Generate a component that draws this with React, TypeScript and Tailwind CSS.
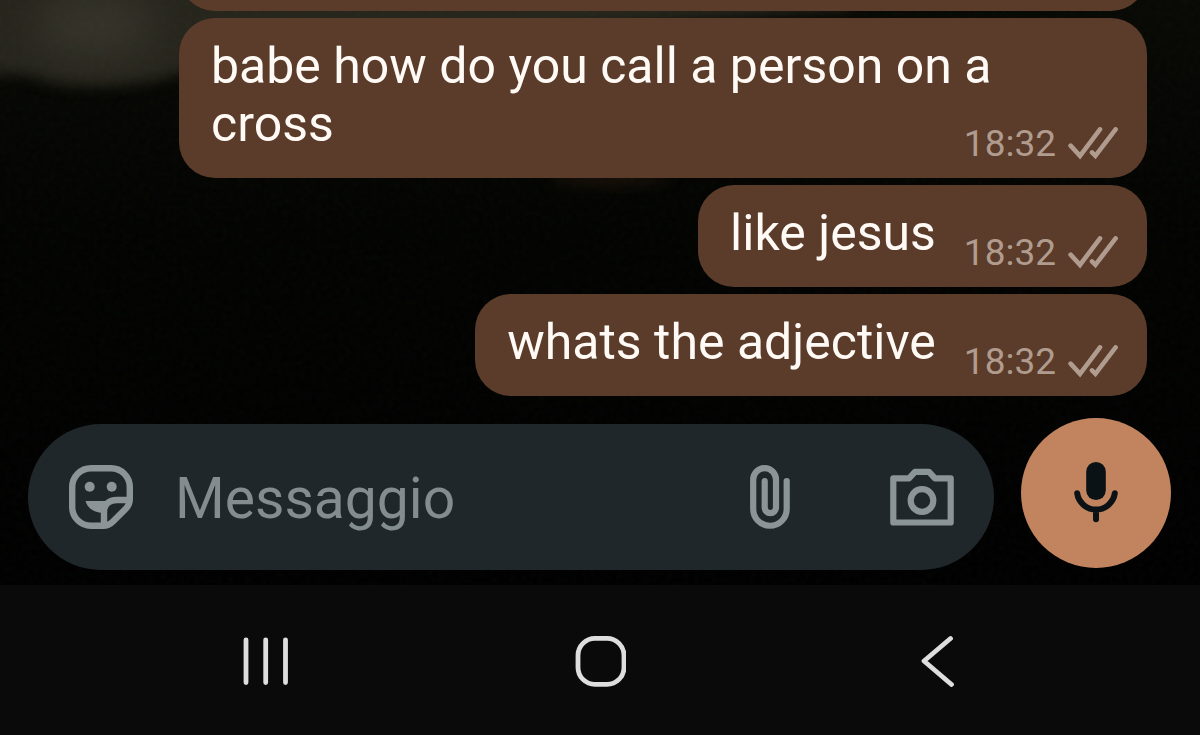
type Message = {
  id: number;
  text: string;
  time: string;
};

const messages: Message[] = [
  { id: 1, text: "babe how do you call a person on a cross", time: "18:32" },
  { id: 2, text: "like jesus", time: "18:32" },
  { id: 3, text: "whats the adjective", time: "18:32" },
];

function DoubleCheck() {
  return (
    <svg
      width="50"
      height="34"
      viewBox="0 0 50 34"
      fill="none"
      stroke="currentColor"
      strokeWidth="4.6"
      strokeLinecap="round"
      aria-hidden="true"
    >
      <path d="M2.6 18.6 12 28.8 32 2.4" />
      <path d="M24 25.4 27.4 28.8 47.6 2.4" />
    </svg>
  );
}

function StickerIcon() {
  return (
    <svg width="64" height="64" viewBox="0 0 64 64" fill="none" aria-hidden="true">
      <g stroke="currentColor" strokeWidth="6.4" strokeLinejoin="round">
        <path d="M22 3.2H42A18.8 18.8 0 0 1 60.8 22V34C60.8 38.5 59.5 41 56.5 44L44 56.5C41 59.5 38.5 60.8 34 60.8H22A18.8 18.8 0 0 1 3.2 42V22A18.8 18.8 0 0 1 22 3.2Z" />
        <path d="M60 35H48C40 35 35 39.5 35 47V60" />
      </g>
      <path d="M16.5 36H41L34 48C25 47.5 18.5 43.5 16.5 36Z" fill="currentColor" />
      <circle cx="20.7" cy="21.7" r="5" fill="currentColor" />
      <circle cx="42.7" cy="21.7" r="5" fill="currentColor" />
    </svg>
  );
}

function PaperclipIcon() {
  return (
    <svg width="40" height="64" viewBox="0 0 40 64" fill="none" aria-hidden="true">
      <path
        d="M36.7 16V44A16.75 16.75 0 0 1 3.2 44V14.6A11.4 11.4 0 0 1 26 14.6V42.5A5.65 5.65 0 0 1 14.7 42.5V16"
        stroke="currentColor"
        strokeWidth="6.2"
        strokeLinecap="round"
      />
    </svg>
  );
}

function CameraIcon() {
  return (
    <svg width="64" height="64" viewBox="0 0 64 64" fill="none" aria-hidden="true">
      <g stroke="currentColor" strokeWidth="6.2" strokeLinejoin="round">
        <path d="M3.3 13.3H19L25 6.8H39L45 13.3H60.7V57.5H3.3Z" />
        <circle cx="32" cy="35.5" r="11.3" />
      </g>
    </svg>
  );
}

function MicIcon() {
  return (
    <svg width="44" height="62" viewBox="0 0 44 62" fill="none" aria-hidden="true">
      <rect x="12.2" y="0" width="19.6" height="38" rx="9.8" fill="currentColor" />
      <path
        d="M3.2 31.3A19 19 0 0 0 40.8 31.3M22 47.5V57.3"
        stroke="currentColor"
        strokeWidth="6"
        strokeLinecap="round"
      />
    </svg>
  );
}

// Dim, grainy photo behind the chat
function Wallpaper() {
  return (
    <svg className="absolute inset-0 w-full h-full" aria-hidden="true">
      <defs>
        <filter id="soft" x="-20%" y="-50%" width="140%" height="200%" colorInterpolationFilters="sRGB">
          <feGaussianBlur stdDeviation="7" />
        </filter>
        <filter id="wide" x="-50%" y="-50%" width="200%" height="200%" colorInterpolationFilters="sRGB">
          <feGaussianBlur stdDeviation="20" />
        </filter>
        <filter id="grain" colorInterpolationFilters="sRGB">
          <feTurbulence type="fractalNoise" baseFrequency="0.18" numOctaves="2" />
        </filter>
        <linearGradient id="shade" x1="0" y1="0" x2="0" y2="1">
          <stop offset="0" stopColor="#080904" />
          <stop offset="0.4" stopColor="#020301" />
          <stop offset="1" stopColor="#000000" />
        </linearGradient>
      </defs>
      <rect width="100%" height="100%" fill="url(#shade)" />
      <path
        d="M-40 -40H850V8L560 30L190 68C165 88 60 92 32 76L-40 72Z"
        fill="#26251c"
        filter="url(#soft)"
      />
      <ellipse cx="95" cy="25" rx="60" ry="32" fill="#35342a" filter="url(#wide)" />
      <ellipse cx="610" cy="178" rx="60" ry="8" fill="#171008" filter="url(#soft)" />
      <rect width="100%" height="100%" filter="url(#grain)" opacity="0.03" />
    </svg>
  );
}

function Bubble({ message }: { message: Message }) {
  return (
    <li className="flow-root shrink-0 max-w-full rounded-[36px] bg-[#5b3b29] pt-[19px] pb-3 pl-8 pr-[29px] text-[50px] leading-[58px] text-[#fffaf5]">
      {message.text}
      <span className="float-right mt-[27px] ml-7 flex items-center gap-3 text-[37px] leading-[44px] text-[#b09c8f]">
        <time>{message.time}</time>
        <DoubleCheck />
      </span>
    </li>
  );
}

function Composer() {
  return (
    <form
      className="flex items-start gap-[27px] pt-[22px] pb-[15px] pl-7 pr-[29px]"
      onSubmit={(e) => e.preventDefault()}
    >
      <div className="mt-1.5 flex h-[146px] min-w-0 flex-1 items-center rounded-full bg-[#20272a] pl-[41px] pr-10 text-[#8b9497]">
        <button type="button" aria-label="Sticker">
          <StickerIcon />
        </button>
        <input
          type="text"
          aria-label="Messaggio"
          placeholder="Messaggio"
          className="ml-[42px] min-w-0 flex-1 bg-transparent pt-1 text-[57px] leading-[68px] text-white outline-none placeholder:text-[#838c8f]"
        />
        <button type="button" aria-label="Allega">
          <PaperclipIcon />
        </button>
        <button type="button" aria-label="Fotocamera" className="ml-[100px]">
          <CameraIcon />
        </button>
      </div>
      <button
        type="button"
        aria-label="Messaggio vocale"
        className="flex size-[150px] shrink-0 items-center justify-center rounded-full bg-[#c1845f] text-[#0b1216]"
      >
        <MicIcon />
      </button>
    </form>
  );
}

function NavBar() {
  return (
    <nav className="grid h-[150px] shrink-0 grid-cols-3 place-items-center bg-[#0a0a0a] px-24 pt-0.5 text-[#dedede]">
      <button type="button" aria-label="Recenti">
        <svg width="52" height="52" viewBox="0 0 52 52" fill="none" stroke="currentColor" strokeWidth="4.8" strokeLinecap="round">
          <path d="M8 4.8V47.6M27.700 4.8V47.6M47.500 4.8V47.6" />
        </svg>
      </button>
      <button type="button" aria-label="Home">
        <svg width="52" height="52" viewBox="0 0 52 52" fill="none" stroke="currentColor" strokeWidth="4.8">
          <rect x="4" y="3.4" width="46" height="46" rx="17" />
        </svg>
      </button>
      <button type="button" aria-label="Indietro">
        <svg width="52" height="52" viewBox="0 0 52 52" fill="none" stroke="currentColor" strokeWidth="4.8" strokeLinecap="round" strokeLinejoin="round">
          <path d="M40.5 3.5 14 26 41.5 49.5" />
        </svg>
      </button>
    </nav>
  );
}

export default function App() {
  return (
    <div className="flex h-screen flex-col bg-black font-[Roboto,sans-serif]">
      <main className="relative flex min-h-0 flex-1 flex-col overflow-hidden">
        <Wallpaper />
        <div className="relative flex min-h-0 flex-1 flex-col">
          <ul className="flex min-h-0 flex-1 flex-col items-end justify-end gap-[7px] pl-[179px] pr-[53px]">
            {/* Tail of the message scrolled off the top */}
            <li className="h-[102px] w-full shrink-0 rounded-[36px] bg-[#5b3b29]" aria-hidden="true" />
            {messages.map((message) => (
              <Bubble key={message.id} message={message} />
            ))}
          </ul>
          <Composer />
        </div>
      </main>
      <NavBar />
    </div>
  );
}
